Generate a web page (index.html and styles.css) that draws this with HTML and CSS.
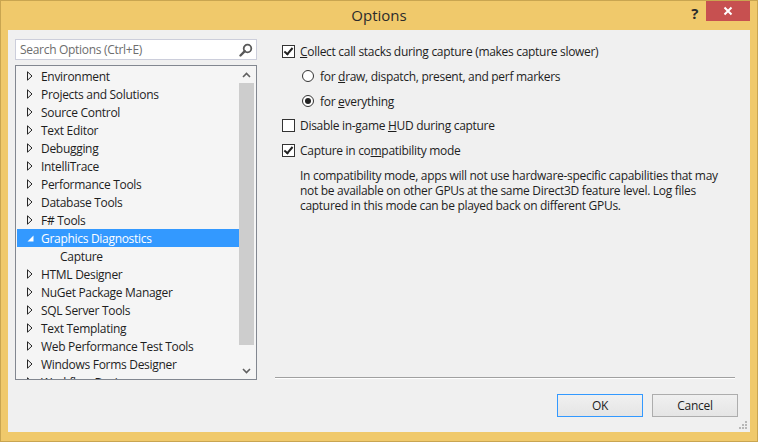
FILE: index.html
```html
<!DOCTYPE html>
<html lang="en">
<head>
  <meta charset="UTF-8" />
  <title>Options</title>
  <link rel="stylesheet" href="styles.css">
</head>
<body>
  <div class="window">
    <div class="titlebar">
      <span class="title">Options</span>
      <span class="help">?</span>
      <span class="close">
        <svg width="10" height="10" viewBox="0 0 10 10"><path d="M1.5 1.5 L8.5 8.5 M8.5 1.5 L1.5 8.5" stroke="#fff" stroke-width="2"/></svg>
      </span>
    </div>

    <div class="client">
      <div class="body">
        <div class="left">
          <div class="search">
            <span class="placeholder">Search Options (Ctrl+E)</span>
            <svg width="14" height="14" viewBox="0 0 14 14"><circle cx="8.5" cy="5.5" r="3.8" fill="none" stroke="#595959" stroke-width="1.8"/><path d="M5.8 8.2 L1.5 12.5" stroke="#595959" stroke-width="2.4" stroke-linecap="round"/></svg>
          </div>
          <div class="tree">
            <ul class="nodes" id="nodes"></ul>
            <div class="scrollbar">
              <div class="sb-arrow">
                <svg width="9" height="6" viewBox="0 0 9 6"><path d="M1 5 L4.5 1.5 L8 5" fill="none" stroke="#606060" stroke-width="1.6"/></svg>
              </div>
              <div class="sb-thumb"></div>
              <div class="sb-track"></div>
              <div class="sb-arrow">
                <svg width="9" height="6" viewBox="0 0 9 6"><path d="M1 1 L4.5 4.5 L8 1" fill="none" stroke="#606060" stroke-width="1.6"/></svg>
              </div>
            </div>
          </div>
        </div>

        <div class="right">
          <div class="opts">
            <label class="row">
              <span class="check on"></span>
              <span><u>C</u>ollect call stacks during capture (makes capture slower)</span>
            </label>
            <label class="row sub">
              <span class="radio"></span>
              <span>for <u>d</u>raw, dispatch, present, and perf markers</span>
            </label>
            <label class="row sub">
              <span class="radio on"></span>
              <span>for <u>e</u>verything</span>
            </label>
            <label class="row">
              <span class="check"></span>
              <span>Disable in-game <u>H</u>UD during capture</span>
            </label>
            <label class="row last">
              <span class="check on"></span>
              <span>Capture in co<u>m</u>patibility mode</span>
            </label>
            <p class="note">In compatibility mode, apps will not use hardware-specific capabilities that may not be available on other GPUs at the same Direct3D feature level. Log files captured in this mode can be played back on different GPUs.</p>
          </div>
          <div class="separator"></div>
        </div>
      </div>

      <div class="footer">
        <button class="btn default">OK</button>
        <button class="btn">Cancel</button>
      </div>
      <svg class="grip" width="10" height="10" viewBox="0 0 10 10">
        <rect x="7" y="1" width="2" height="2" fill="#b8b8b8"/>
        <rect x="4" y="4" width="2" height="2" fill="#b8b8b8"/><rect x="7" y="4" width="2" height="2" fill="#b8b8b8"/>
        <rect x="1" y="7" width="2" height="2" fill="#b8b8b8"/><rect x="4" y="7" width="2" height="2" fill="#b8b8b8"/><rect x="7" y="7" width="2" height="2" fill="#b8b8b8"/>
      </svg>
    </div>
  </div>

  <script>
    const nodes = [
      "Environment", "Projects and Solutions", "Source Control", "Text Editor",
      "Debugging", "IntelliTrace", "Performance Tools", "Database Tools", "F# Tools",
      "Graphics Diagnostics", "Capture", "HTML Designer", "NuGet Package Manager",
      "SQL Server Tools", "Text Templating", "Web Performance Test Tools",
      "Windows Forms Designer", "Workflow Designer"
    ];
    const closedArrow = '<svg width="6" height="10" viewBox="0 0 6 10"><path d="M0.5 0.8 L5 5 L0.5 9.2 Z" fill="none" stroke="#262626" stroke-width="1"/></svg>';
    const openArrow = '<svg width="7" height="7" viewBox="0 0 7 7"><path d="M6.5 0.5 L6.5 6.5 L0.5 6.5 Z" fill="#fff"/></svg>';

    const list = document.getElementById("nodes");
    nodes.forEach(name => {
      const li = document.createElement("li");
      li.className = "node";
      if (name === "Capture") {
        li.classList.add("child");
        li.innerHTML = '<span class="label">' + name + '</span>';
      } else if (name === "Graphics Diagnostics") {
        li.classList.add("selected");
        li.innerHTML = '<span class="arrow">' + openArrow + '</span><span class="label">' + name + '</span>';
      } else {
        li.innerHTML = '<span class="arrow">' + closedArrow + '</span><span class="label">' + name + '</span>';
      }
      list.appendChild(li);
    });
  </script>
</body>
</html>
```

FILE: styles.css
```css
body {
  margin: 0;
  font-family: "Open Sans", "Noto Sans", sans-serif;
  font-size: 12px;
  letter-spacing: -0.3px;
  color: #1e1e1e;
  background: #f0c96b;
}
.window {
  width: 758px;
  height: 442px;
  box-sizing: border-box;
  background: #f0c96b;
  border: 1px solid #c9a550;
  display: flex;
  flex-direction: column;
}
.titlebar {
  height: 29px;
  position: relative;
  display: flex;
  align-items: center;
  justify-content: center;
}
.title {
  font-size: 15px;
  letter-spacing: 0;
  color: #2b2b2b;
  margin-top: -1px;
}
.help {
  position: absolute;
  right: 59px;
  top: 2px;
  font-weight: bold;
  font-size: 15px;
  color: #2b2b2b;
}
.close {
  position: absolute;
  right: 7px;
  top: 0;
  width: 44px;
  height: 20px;
  background: #c75050;
  display: flex;
  align-items: center;
  justify-content: center;
}
.client {
  position: relative;
  flex: 1;
  margin: 0 7px 9px 7px;
  background: #f0f0f0;
  padding: 9px 12px 15px 7px;
  display: flex;
  flex-direction: column;
}
.body {
  flex: 1;
  display: flex;
  gap: 18px;
}
.left {
  width: 242px;
  flex-shrink: 0;
  display: flex;
  flex-direction: column;
  gap: 5px;
}
.search {
  height: 21px;
  box-sizing: border-box;
  border: 1px solid #cccedb;
  background: #fff;
  display: flex;
  align-items: center;
  justify-content: space-between;
  padding: 0 3px 0 4px;
}
.placeholder {
  color: #6d6d6d;
}
.tree {
  height: 315px;
  box-sizing: border-box;
  border: 1px solid #828790;
  background: #f5f5f5;
  display: flex;
  overflow: hidden;
}
.nodes {
  list-style: none;
  margin: 0;
  padding: 1px 0 0 1px;
  flex: 1;
}
.node {
  height: 18px;
  display: flex;
  align-items: center;
  white-space: nowrap;
}
.arrow {
  width: 24px;
  display: flex;
  justify-content: flex-end;
}
.arrow svg {
  margin-right: 8px;
}
.node.child .label {
  padding-left: 43px;
}
.node.selected {
  background: #3399ff;
  color: #fff;
}
.node.selected .arrow svg {
  margin-right: 7px;
}
.scrollbar {
  width: 15px;
  margin-right: 2px;
  display: flex;
  flex-direction: column;
}
.sb-arrow {
  height: 17px;
  display: flex;
  align-items: center;
  justify-content: center;
}
.sb-thumb {
  height: 262px;
  background: #cdcdcd;
}
.sb-track {
  flex: 1;
}
.right {
  flex: 1;
  min-width: 0;
  margin-right: 3px;
  display: flex;
  flex-direction: column;
}
.opts {
  flex: 1;
  padding-left: 7px;
}
.row {
  height: 24px;
  display: flex;
  align-items: center;
  gap: 5px;
}
.row.sub {
  padding-left: 20px;
  gap: 6px;
  margin-top: 1px;
}
.row.last {
  margin-top: 1px;
}
.check {
  width: 13px;
  height: 13px;
  box-sizing: border-box;
  border: 1px solid #333;
  background: #fff;
  position: relative;
}
.check.on::after {
  content: "";
  position: absolute;
  left: 3px;
  top: 0px;
  width: 3px;
  height: 7px;
  border: solid #222;
  border-width: 0 2px 2px 0;
  transform: rotate(40deg);
}
.radio {
  width: 12px;
  height: 12px;
  box-sizing: border-box;
  border: 1px solid #333;
  border-radius: 50%;
  background: #fff;
  display: flex;
  align-items: center;
  justify-content: center;
}
.radio.on::after {
  content: "";
  width: 6px;
  height: 6px;
  border-radius: 50%;
  background: #222;
}
.note {
  margin: 6px 0 0 18px;
  line-height: 15px;
  padding-right: 10px;
}
.separator {
  height: 1px;
  background: #a0a0a0;
  border-bottom: 1px solid #fff;
  margin-bottom: 1px;
}
.footer {
  display: flex;
  justify-content: flex-end;
  gap: 9px;
  margin-top: 14px;
}
.btn {
  width: 86px;
  height: 23px;
  border: 1px solid #adadad;
  background: linear-gradient(#f0f0f0, #e5e5e5);
  font-family: inherit;
  font-size: 12px;
  letter-spacing: -0.3px;
  color: #1e1e1e;
  padding: 0;
}
.btn.default {
  border-color: #3399ff;
}
.grip {
  position: absolute;
  right: 2px;
  bottom: 2px;
}
```
